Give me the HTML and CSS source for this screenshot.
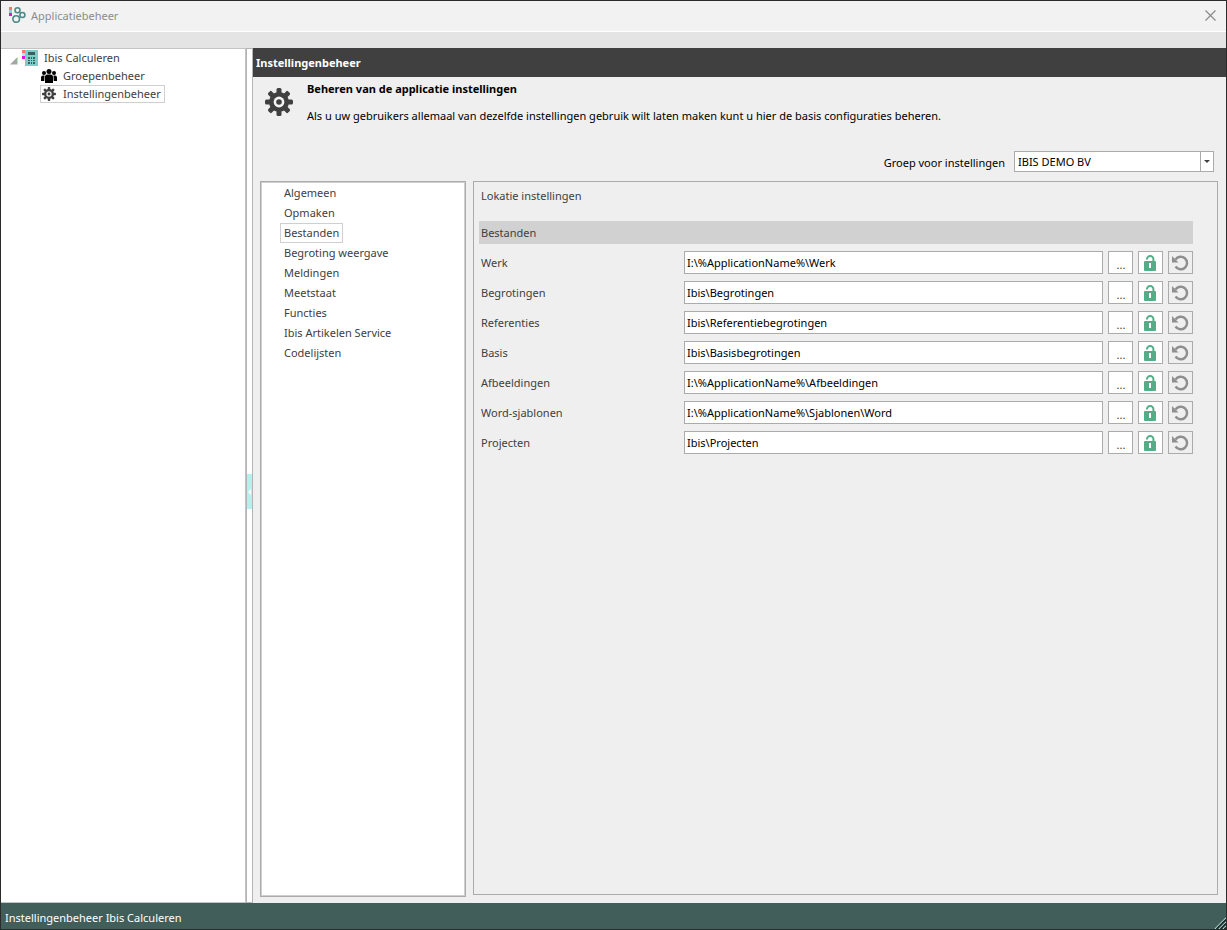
FILE: index.html
```html
<!DOCTYPE html>
<html lang="nl">
<head>
<meta charset="utf-8">
<title>Applicatiebeheer</title>
<link rel="stylesheet" href="styles.css">
</head>
<body>
<svg class="defs" aria-hidden="true">
  <symbol id="gear" viewBox="0 0 28 28">
    <g fill="#404040">
      <g id="teeth"><rect x="11.500" y="0" width="5" height="28" rx="1.500"/><rect x="0" y="11.500" width="28" height="5" rx="1.500"/></g>
      <use href="#teeth" transform="rotate(45 14 14)"/>
      <circle cx="14" cy="14" r="10"/>
    </g>
    <circle cx="14" cy="14" r="5.400" fill="#f4f4f4"/>
    <circle cx="14" cy="14" r="2.800" fill="#404040"/>
  </symbol>
  <symbol id="lock" viewBox="0 0 13 16">
    <path d="M3 4.500V4a3.200 3 0 0 1 6.400 0v3" fill="none" stroke="#54ad87" stroke-width="2"/>
    <rect x="0" y="6" width="12" height="10" rx="1" fill="#54ad87"/>
    <path d="M5 8h2v5H5z" fill="#fff"/>
  </symbol>
  <symbol id="undo" viewBox="0 0 17 16">
    <path d="M3.500 4.500A6.300 6.300 0 1 1 3.500 11.500" fill="none" stroke="#8f8f8f" stroke-width="2.400"/>
    <path d="M0 1v6.500h6.500z" fill="#8f8f8f"/>
  </symbol>
</svg>
<div class="window">
  <header class="titlebar">
    <svg class="logo" width="17" height="17" viewBox="0 0 17 17" aria-hidden="true">
      <rect x="0" y="0" width="3" height="3" fill="#f47a60"/><rect x="0" y="3" width="3" height="3" fill="#7fd6d0"/><rect x="0" y="6" width="3" height="3" fill="#e012e8"/>
      <g fill="none" stroke="#4b8a86" stroke-width="1.6"><circle cx="8.5" cy="3.3" r="2.5"/><circle cx="13.4" cy="8" r="2.5"/><circle cx="7.2" cy="12" r="3.3"/></g>
    </svg>
    <h1 class="title">Applicatiebeheer</h1>
    <button class="close" type="button" aria-label="Sluiten"><svg width="11" height="11" viewBox="0 0 11 11"><path d="M.5.5l10 10M10.500.5l-10 10" stroke="#8a8a8a" stroke-width="1.200"/></svg></button>
  </header>
  <div class="toolbar"></div>
  <div class="body">
    <nav class="tree" aria-label="Onderdelen">
      <div class="node root">
        <svg class="twisty" width="8" height="8" viewBox="0 0 8 8" aria-hidden="true"><path d="M7.500 0v7.500H0z" fill="#a6a6a6"/></svg>
        <svg width="16" height="16" viewBox="0 0 16 16" aria-hidden="true"><rect x="3" width="13" height="16" fill="#7bcfc8"/><rect width="3" height="3" fill="#f47a60"/><rect y="3" width="3" height="3" fill="#a8ece6"/><rect y="6" width="3" height="3" fill="#e012e8"/><rect x="6" y="2" width="7" height="3" fill="#38615e"/><path d="M6 7h2v2H6zM9 7h1v2H9zM11 7h2v2h-2zM6 10h2v1H6zM9 10h1v1H9zM11 10h2v1h-2zM6 12h2v2H6zM9 12h1v2H9zM11 12h2v2h-2z" fill="#38615e"/></svg>
        <span class="node-label">Ibis Calculeren</span>
      </div>
      <div class="node child">
        <svg width="16" height="14" viewBox="0 0 16 14" aria-hidden="true"><circle cx="8" cy="2.500" r="2.500"/><circle cx="3" cy="4" r="2"/><circle cx="13" cy="4" r="2"/><path d="M4 14V8q0-2.500 2.500-2.500h3Q12 5.500 12 8v6zM0 12V8.500q0-2 2-2h1.500L3.300 12zM16 12V8.500q0-2-2-2h-1.500l.2 5.500z"/></svg>
        <span class="node-label">Groepenbeheer</span>
      </div>
      <div class="node child selected">
        <svg width="14" height="14" aria-hidden="true"><use href="#gear"/></svg>
        <span class="node-label">Instellingenbeheer</span>
      </div>
    </nav>
    <button class="splitter" type="button" aria-label="Paneel inklappen"><span class="grip"><svg width="3" height="6" viewBox="0 0 3 6"><path d="M3 0v6L0 3z" fill="#fff"/></svg></span></button>
    <main class="content">
      <h2 class="content-title">Instellingenbeheer</h2>
      <section class="intro">
        <svg class="intro-icon" width="28" height="28" aria-hidden="true"><use href="#gear"/></svg>
        <div>
          <h3 class="intro-title">Beheren van de applicatie instellingen</h3>
          <p class="intro-text">Als u uw gebruikers allemaal van dezelfde instellingen gebruik wilt laten maken kunt u hier de basis configuraties beheren.</p>
        </div>
      </section>
      <div class="group-row">
        <label for="group">Groep voor instellingen</label>
        <div class="combo"><select id="group"><option>IBIS DEMO BV</option></select><span class="combo-arrow"></span></div>
      </div>
      <div class="panels">
        <ul class="categories">
          <li><a href="#">Algemeen</a></li>
          <li><a href="#">Opmaken</a></li>
          <li><a href="#" class="current">Bestanden</a></li>
          <li><a href="#">Begroting weergave</a></li>
          <li><a href="#">Meldingen</a></li>
          <li><a href="#">Meetstaat</a></li>
          <li><a href="#">Functies</a></li>
          <li><a href="#">Ibis Artikelen Service</a></li>
          <li><a href="#">Codelijsten</a></li>
        </ul>
        <form class="settings">
          <h3 class="settings-title">Lokatie instellingen</h3>
          <h4 class="section-title">Bestanden</h4>
          <div class="field"><label for="f1">Werk</label><input id="f1" type="text" value="I:\%ApplicationName%\Werk"><button type="button" class="browse">...</button><button type="button" aria-label="Vergrendelen"><svg width="13" height="16"><use href="#lock"/></svg></button><button type="button" class="reset" aria-label="Herstellen"><svg width="17" height="16"><use href="#undo"/></svg></button></div>
          <div class="field"><label for="f2">Begrotingen</label><input id="f2" type="text" value="Ibis\Begrotingen"><button type="button" class="browse">...</button><button type="button" aria-label="Vergrendelen"><svg width="13" height="16"><use href="#lock"/></svg></button><button type="button" class="reset" aria-label="Herstellen"><svg width="17" height="16"><use href="#undo"/></svg></button></div>
          <div class="field"><label for="f3">Referenties</label><input id="f3" type="text" value="Ibis\Referentiebegrotingen"><button type="button" class="browse">...</button><button type="button" aria-label="Vergrendelen"><svg width="13" height="16"><use href="#lock"/></svg></button><button type="button" class="reset" aria-label="Herstellen"><svg width="17" height="16"><use href="#undo"/></svg></button></div>
          <div class="field"><label for="f4">Basis</label><input id="f4" type="text" value="Ibis\Basisbegrotingen"><button type="button" class="browse">...</button><button type="button" aria-label="Vergrendelen"><svg width="13" height="16"><use href="#lock"/></svg></button><button type="button" class="reset" aria-label="Herstellen"><svg width="17" height="16"><use href="#undo"/></svg></button></div>
          <div class="field"><label for="f5">Afbeeldingen</label><input id="f5" type="text" value="I:\%ApplicationName%\Afbeeldingen"><button type="button" class="browse">...</button><button type="button" aria-label="Vergrendelen"><svg width="13" height="16"><use href="#lock"/></svg></button><button type="button" class="reset" aria-label="Herstellen"><svg width="17" height="16"><use href="#undo"/></svg></button></div>
          <div class="field"><label for="f6">Word-sjablonen</label><input id="f6" type="text" value="I:\%ApplicationName%\Sjablonen\Word"><button type="button" class="browse">...</button><button type="button" aria-label="Vergrendelen"><svg width="13" height="16"><use href="#lock"/></svg></button><button type="button" class="reset" aria-label="Herstellen"><svg width="17" height="16"><use href="#undo"/></svg></button></div>
          <div class="field"><label for="f7">Projecten</label><input id="f7" type="text" value="Ibis\Projecten"><button type="button" class="browse">...</button><button type="button" aria-label="Vergrendelen"><svg width="13" height="16"><use href="#lock"/></svg></button><button type="button" class="reset" aria-label="Herstellen"><svg width="17" height="16"><use href="#undo"/></svg></button></div>
        </form>
      </div>
    </main>
  </div>
  <footer class="status">
    <span>Instellingenbeheer Ibis Calculeren</span>
    <svg class="resize" width="12" height="12" viewBox="0 0 12 12" aria-hidden="true"><path d="M1 12L12 1M5 12l7-7M9 12l3-3" stroke="#a9d6cf" stroke-width="1.200"/><path d="M2.500 12L12 2.500M6.500 12L12 6.500M10.500 12l1.500-1.500" stroke="#1c2b2a" stroke-width="1.600"/></svg>
  </footer>
</div>
</body>
</html>
```

FILE: styles.css
```css
* { box-sizing: border-box; }
body { margin: 0; font: 11px/18px "Noto Sans", "Open Sans", sans-serif; color: #404040; }
h1, h2, h3, h4, p, ul { margin: 0; padding: 0; font-size: 11px; font-weight: 400; }
ul { list-style: none; }
button, input, select { font: inherit; margin: 0; padding: 0; border-radius: 0; }
svg { display: block; flex: none; }
.defs { position: absolute; width: 0; height: 0; }
.window { display: flex; flex-direction: column; min-height: 100vh; border: 1px solid #2b2b2b; background: #efefef; }

.titlebar { display: flex; align-items: center; gap: 5px; height: 31px; padding: 0 10px 2px 8px; background: #f2f2f2; border-bottom: 1px solid #fff; }
.title { flex: 1; padding-top: 2px; color: #8c8c8c; }
.close { display: flex; align-items: center; border: 0; background: none; }
.toolbar { height: 16px; background: #e4e4e4; }

.body { display: flex; flex: 1; }
.tree { width: 245px; background: #fff; border: 1px solid #c4c4c4; border-left: 0; }
.node { display: flex; align-items: center; height: 18px; width: max-content; }
.root { gap: 4px; margin-left: 9px; }
.twisty { margin-top: 6px; }
.root .node-label { padding-left: 2px; }
.child { gap: 6px; margin-left: 39px; padding: 0 3px 0 0; border: 1px solid transparent; }
.child svg { width: 16px; }
.selected { border-color: #cfcfcf; }
.splitter { display: flex; align-items: center; width: 7px; border: 1px solid #b4b4b4; background: #fff; }
.grip { display: flex; align-items: center; justify-content: center; width: 5px; height: 35px; margin-top: 32px; background: #b3f1ea; }

.content { display: flex; flex-direction: column; flex: 1; min-width: 0; }
.content-title { height: 29px; padding-left: 3px; line-height: 29px; background: #404040; color: #fff; font-weight: 700; }
.intro { display: flex; gap: 14px; padding: 3px 12px 0; color: #000; }
.intro-icon { margin-top: 8px; }
.intro-title { font-weight: 700; }
.intro-text { margin-top: 9px; }
.group-row { display: flex; align-items: center; justify-content: flex-end; gap: 9px; margin-top: 26px; padding-right: 12px; color: #000; }
.group-row label { padding-top: 2px; }
.combo { position: relative; width: 200px; }
.combo select { display: block; width: 100%; height: 21px; padding: 0 20px 0 3px; border: 1px solid #ababab; background: #fff; color: #000; appearance: none; }
.combo-arrow { position: absolute; top: 0; right: 0; width: 14px; height: 21px; border: 1px solid #ababab; pointer-events: none; }
.combo-arrow::after { content: ""; position: absolute; top: 8px; left: 3px; border: 3px solid transparent; border-top-color: #404040; border-bottom: 0; }

.panels { display: flex; flex: 1; gap: 7px; margin-top: 9px; padding: 0 8px 6px 7px; }
.categories { width: 206px; padding: 0 0 0 19px; border: 1px solid #ababab; box-shadow: inset 0 0 0 1px #cfcfcf; background: #fff; }
.categories li { display: flex; height: 20px; }
.categories li:first-child { margin-top: 1px; }
.categories a { padding: 0 3px; border: 1px solid transparent; color: inherit; text-decoration: none; }
.categories a.current { border-color: #cfcfcf; }
.settings { flex: 1; min-width: 0; margin-bottom: 2px; padding: 5px 24px 0 5px; border: 1px solid #ababab; }
.settings-title { padding-left: 2px; }
.section-title { height: 23px; margin: 16px 0 7px; padding-left: 2px; line-height: 23px; background: #d1d1d1; }
.field { display: flex; gap: 5px; height: 23px; margin-bottom: 7px; line-height: 23px; }
.field label { width: 200px; padding-left: 2px; }
.field input { flex: 1; min-width: 0; padding: 0 2px; border: 1px solid #ababab; background: #fff; color: #000; }
.field button { display: flex; align-items: center; justify-content: center; width: 25px; border: 1px solid #ababab; background: #fff; color: #404040; }
.field .reset { background: #efefef; }
.field .browse { padding: 3px 0 0 1px; }

.status { display: flex; justify-content: space-between; align-items: center; height: 26px; padding-left: 4px; background: #425e5b; color: #fff; }
.status span { padding-top: 3px; }
.resize { align-self: flex-end; }
```
